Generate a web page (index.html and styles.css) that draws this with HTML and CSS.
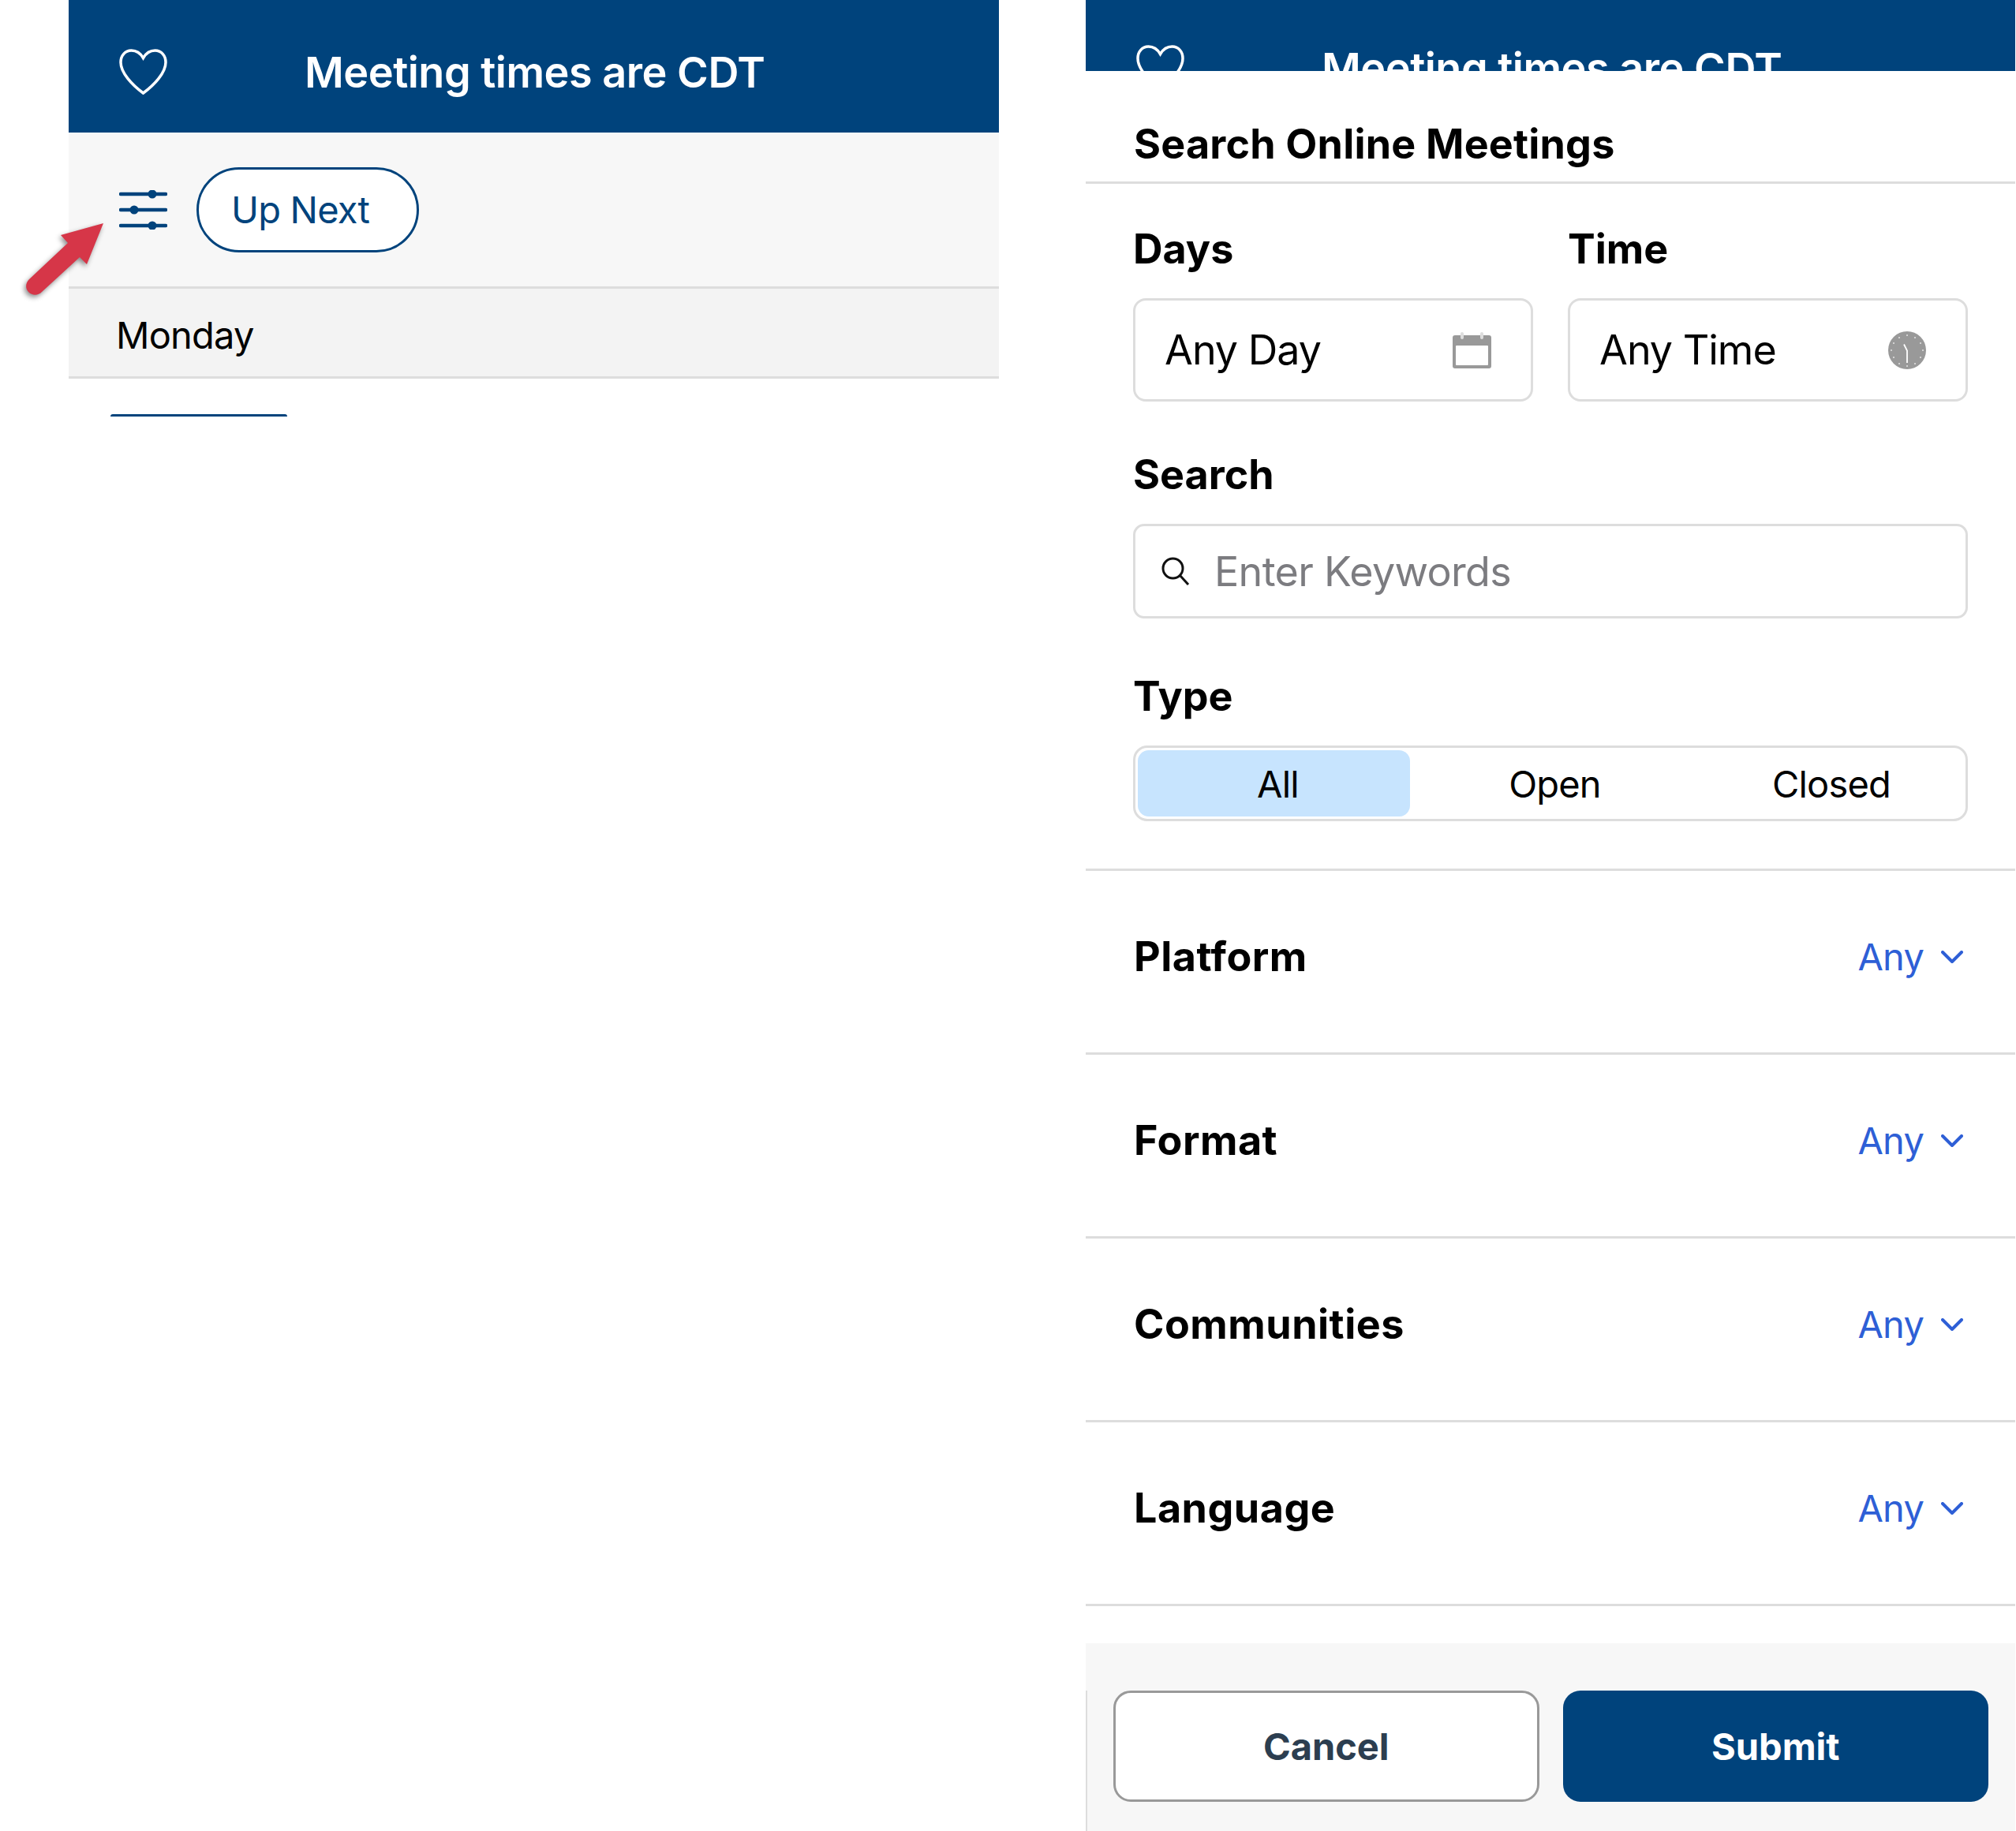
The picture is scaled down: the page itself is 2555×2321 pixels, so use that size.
FILE: index.html
```html
<!DOCTYPE html>
<html lang="en">
  <head>
    <title>Search Online Meetings</title>
    <meta charset="UTF-8" />
    <link rel="stylesheet" href="styles.css">
  </head>
  <body>
    <div class="panel panelLeft">
      <div class="topbar">
        <svg class="heart" viewBox="0 0 61 58"><path d="M30.5 11.5C27 5.500 21.500 2 15.500 2 7.500 2 2 8.500 2 17c0 13 14 28.500 28.500 39C45 45.500 59 30 59 17c0-8.500-5.500-15-13.500-15-6 0-11.500 3.500-15 9.500z"/></svg>
        <span class="topbarText">Meeting times are CDT</span>
      </div>
      <div class="toolbar">
        <svg class="sliders" viewBox="0 0 61 50">
          <path d="M2 5h57M2 25h57M2 45h57"/>
          <circle cx="42" cy="5" r="5.500"/>
          <circle cx="19" cy="25" r="5.500"/>
          <circle cx="42" cy="45" r="5.500"/>
        </svg>
        <button class="upNext">Up Next</button>
      </div>
      <div class="dayRow">Monday</div>
      <div class="cardEdge"></div>
    </div>

    <div class="panel panelRight">
      <div class="topClip">
        <div class="topbar topbarBehind">
          <svg class="heart" viewBox="0 0 61 58"><path d="M30.5 11.5C27 5.500 21.500 2 15.500 2 7.500 2 2 8.500 2 17c0 13 14 28.500 28.500 39C45 45.500 59 30 59 17c0-8.500-5.500-15-13.500-15-6 0-11.500 3.500-15 9.500z"/></svg>
          <span class="topbarText">Meeting times are CDT</span>
        </div>
      </div>

      <div class="sheetTitle">Search Online Meetings</div>

      <div class="form">
        <div class="twoCol">
          <div>
            <div class="label">Days</div>
            <div class="picker">
              <span>Any Day</span>
              <svg class="calendar" viewBox="0 0 49 46">
                <rect x="0" y="4" width="49" height="42" rx="3" fill="#999"/>
                <rect x="4" y="17" width="41" height="25" rx="1" fill="#fff"/>
                <rect x="10" y="0" width="4" height="9" rx="2" fill="#ddd"/>
                <rect x="35" y="0" width="4" height="9" rx="2" fill="#ddd"/>
              </svg>
            </div>
          </div>
          <div>
            <div class="label">Time</div>
            <div class="picker">
              <span>Any Time</span>
              <svg class="clock" viewBox="0 0 48 48">
                <circle cx="24" cy="24" r="24" fill="#999"/>
                <g fill="#e4e4e4">
                  <circle cx="24" cy="5" r="1"/><circle cx="34" cy="8" r="1"/><circle cx="41" cy="15" r="1"/>
                  <circle cx="44" cy="24" r="1"/><circle cx="41" cy="33" r="1"/><circle cx="34" cy="41" r="1"/>
                  <circle cx="24" cy="44" r="1"/><circle cx="14" cy="41" r="1"/><circle cx="7" cy="33" r="1"/>
                  <circle cx="4" cy="24" r="1"/><circle cx="7" cy="15" r="1"/><circle cx="14" cy="8" r="1"/>
                </g>
                <path d="M20 16.500l4 8V40" fill="none" stroke="#fff" stroke-width="1.800"/>
              </svg>
            </div>
          </div>
        </div>

        <div class="label labelSearch">Search</div>
        <div class="searchBox">
          <svg class="searchIcon" viewBox="0 0 36 36">
            <circle cx="14.500" cy="14.500" r="12.500"/>
            <path d="M24 24l10 11"/>
          </svg>
          <span>Enter Keywords</span>
        </div>

        <div class="label labelType">Type</div>
        <div class="segment">
          <div class="segItem segActive">All</div>
          <div class="segItem">Open</div>
          <div class="segItem">Closed</div>
        </div>
      </div>

      <div class="filterRow">
        <span class="filterName">Platform</span>
        <span class="filterValue">Any<svg class="chevron" viewBox="0 0 28 16"><path d="M2 2l12 12L26 2"/></svg></span>
      </div>
      <div class="filterRow">
        <span class="filterName">Format</span>
        <span class="filterValue">Any<svg class="chevron" viewBox="0 0 28 16"><path d="M2 2l12 12L26 2"/></svg></span>
      </div>
      <div class="filterRow">
        <span class="filterName">Communities</span>
        <span class="filterValue">Any<svg class="chevron" viewBox="0 0 28 16"><path d="M2 2l12 12L26 2"/></svg></span>
      </div>
      <div class="filterRow">
        <span class="filterName">Language</span>
        <span class="filterValue">Any<svg class="chevron" viewBox="0 0 28 16"><path d="M2 2l12 12L26 2"/></svg></span>
      </div>

      <div class="footer">
        <button class="btn btnCancel">Cancel</button>
        <button class="btn btnSubmit">Submit</button>
      </div>
    </div>

    <!-- red callout arrow pasted over the screenshot -->
    <svg class="callout" viewBox="0 0 150 150">
      <path d="M131 33L77 48l9 10-49 46c-5 5-5 12-1 16 5 5 12 5 17 0l48-44 9 9z"/>
    </svg>
  </body>
</html>
```

FILE: styles.css
```css
* {
  box-sizing: border-box;
}
body {
  margin: 0;
  padding-left: 87px;
  width: 2555px;
  height: 2321px;
  display: flex;
  gap: 110px;
  position: relative;
  overflow: hidden;
  background: #fff;
  font-family: Inter, "Liberation Sans", sans-serif;
  color: #000;
}
.panel {
  flex: none;
}
.panelLeft {
  width: 1179px;
}
.panelRight {
  width: 1178px;
}

.topbar {
  height: 168px;
  background: #00437c;
  display: flex;
  align-items: center;
  padding-left: 64px;
  padding-top: 14px;
}
.topClip {
  height: 90px;
  overflow: hidden;
  background: #00437c;
}
.topbarBehind {
  margin-top: -5px;
}
.heart {
  width: 61px;
  height: 58px;
  flex: none;
  fill: none;
  stroke: #fff;
  stroke-width: 3.500;
}
.topbarText {
  margin-left: 174px;
  font-size: 54px;
  font-weight: 600;
  letter-spacing: -0.500px;
  color: #fff;
  white-space: nowrap;
}

.toolbar {
  height: 195px;
  background: #f7f7f7;
  display: flex;
  align-items: center;
  padding-left: 64px;
  gap: 37px;
}
.sliders {
  width: 61px;
  height: 50px;
  flex: none;
  stroke: #00437c;
  fill: #00437c;
}
.sliders path {
  fill: none;
  stroke-width: 4.500;
  stroke-linecap: round;
}
.sliders circle {
  stroke: none;
}
.upNext {
  width: 282px;
  height: 108px;
  background: #fff;
  border: 3px solid #00437c;
  border-radius: 54px;
  color: #00437c;
  font-family: inherit;
  font-size: 47px;
  letter-spacing: -0.800px;
  padding: 0 19px 0 0;
}
.dayRow {
  height: 117px;
  background: #f3f3f3;
  border-top: 3px solid #ddd;
  border-bottom: 3px solid #ddd;
  padding: 6px 0 0 60px;
  display: flex;
  align-items: center;
  font-size: 47px;
  letter-spacing: -0.800px;
}
.cardEdge {
  width: 224px;
  height: 3px;
  margin: 45px 0 0 53px;
  background: #00437c;
  border-radius: 12px 12px 0 0;
}

.sheetTitle {
  height: 143px;
  padding-left: 61px;
  border-bottom: 3px solid #ddd;
  display: flex;
  align-items: center;
  padding-top: 45px;
  padding-bottom: 0;
  font-size: 52px;
  font-weight: 700;
  letter-spacing: 0.200px;
}
.form {
  padding: 53px 60px 60px 60px;
  border-bottom: 3px solid #ddd;
}
.twoCol {
  display: grid;
  grid-template-columns: 507px 507px;
  gap: 44px;
}
.label {
  height: 60px;
  line-height: 60px;
  margin-bottom: 32px;
  font-size: 52px;
  font-weight: 700;
}
.labelSearch {
  margin-top: 63px;
  margin-bottom: 32px;
}
.labelType {
  margin-top: 69px;
}
.picker {
  height: 131px;
  border: 3px solid #ddd;
  border-radius: 16px;
  display: flex;
  align-items: center;
  justify-content: space-between;
  padding: 0 50px 0 37px;
  font-size: 52px;
  letter-spacing: -1px;
}
.calendar {
  width: 49px;
  height: 46px;
}
.clock {
  width: 48px;
  height: 48px;
}
.searchBox {
  height: 120px;
  border: 3px solid #ddd;
  border-radius: 14px;
  display: flex;
  align-items: center;
  gap: 31px;
  padding-left: 33px;
  font-size: 52px;
  letter-spacing: -0.650px;
  color: #7c7c80;
}
.searchIcon {
  width: 36px;
  height: 36px;
  fill: none;
  stroke: #111;
  stroke-width: 3;
}
.segment {
  height: 96px;
  border: 3px solid #ddd;
  border-radius: 18px;
  padding: 3px;
  display: grid;
  grid-template-columns: 345px 367px 1fr;
}
.segItem {
  display: flex;
  align-items: center;
  justify-content: center;
  font-size: 47px;
  letter-spacing: -0.800px;
}
.segActive {
  background: #c7e4fe;
  border-radius: 14px;
  padding-left: 10px;
}

.filterRow {
  height: 233px;
  border-bottom: 3px solid #ddd;
  padding: 0 66px 13px 61px;
  display: flex;
  align-items: center;
  justify-content: space-between;
}
.filterName {
  font-size: 52px;
  font-weight: 700;
  letter-spacing: 0.500px;
}
.filterValue {
  display: flex;
  align-items: center;
  gap: 22px;
  font-size: 47px;
  letter-spacing: -0.800px;
  color: #2e5fd6;
}
.chevron {
  width: 28px;
  height: 16px;
  fill: none;
  stroke: #2e5fd6;
  stroke-width: 4;
  stroke-linecap: round;
  stroke-linejoin: round;
}

.footer {
  margin-top: 47px;
  height: 238px;
  background: #f7f7f7;
  padding: 60px 34px 37px 35px;
  display: grid;
  grid-template-columns: 1fr 1fr;
  gap: 30px;
  position: relative;
}
.footer::before {
  content: "";
  position: absolute;
  left: 0;
  top: 60px;
  bottom: 0;
  width: 2px;
  background: #ddd;
}
.btn {
  border-radius: 22px;
  font-family: inherit;
  font-size: 47px;
  font-weight: 700;
  padding: 0;
}
.btnCancel {
  background: #fff;
  border: 3px solid #999;
  color: #2c3e50;
}
.btnSubmit {
  background: #00437c;
  border: 0;
  color: #fff;
}

.callout {
  position: absolute;
  left: 0;
  top: 250px;
  width: 150px;
  height: 150px;
  fill: #d63648;
  filter: drop-shadow(-2px 3px 3px rgba(0, 0, 0, 0.45));
}
```
